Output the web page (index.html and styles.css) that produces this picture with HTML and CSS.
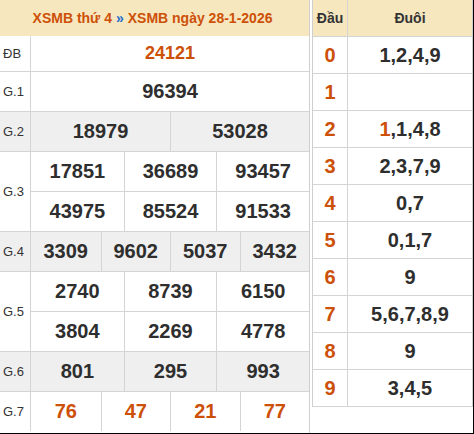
FILE: index.html
```html
<!DOCTYPE html>
<html lang="vi">
<head>
<meta charset="utf-8">
<title>XSMB 28-1-2026</title>
<link rel="stylesheet" href="styles.css">
</head>
<body>
<div class="page">
  <div class="results">
    <div class="res-head">XSMB thứ 4 <span class="sep">»</span> XSMB ngày 28-1-2026</div>
    <div class="prize db"><div class="lbl">ĐB</div><div class="nums c1"><span class="special">24121</span></div></div>
    <div class="prize"><div class="lbl">G.1</div><div class="nums c1"><span>96394</span></div></div>
    <div class="prize alt"><div class="lbl">G.2</div><div class="nums c2"><span>18979</span><span>53028</span></div></div>
    <div class="prize"><div class="lbl">G.3</div><div class="nums c3"><span>17851</span><span>36689</span><span>93457</span><span>43975</span><span>85524</span><span>91533</span></div></div>
    <div class="prize alt"><div class="lbl">G.4</div><div class="nums c4"><span>3309</span><span>9602</span><span>5037</span><span>3432</span></div></div>
    <div class="prize"><div class="lbl">G.5</div><div class="nums c3"><span>2740</span><span>8739</span><span>6150</span><span>3804</span><span>2269</span><span>4778</span></div></div>
    <div class="prize alt"><div class="lbl">G.6</div><div class="nums c3"><span>801</span><span>295</span><span>993</span></div></div>
    <div class="prize last"><div class="lbl">G.7</div><div class="nums c4 hot"><span>76</span><span>47</span><span>21</span><span>77</span></div></div>
  </div>
  <div class="loto">
    <div class="loto-row loto-head"><div class="dau">Đầu</div><div class="duoi">Đuôi</div></div>
    <div class="loto-row"><div class="dau">0</div><div class="duoi">1,2,4,9</div></div>
    <div class="loto-row"><div class="dau">1</div><div class="duoi"></div></div>
    <div class="loto-row"><div class="dau">2</div><div class="duoi"><span class="hl">1</span>,1,4,8</div></div>
    <div class="loto-row"><div class="dau">3</div><div class="duoi">2,3,7,9</div></div>
    <div class="loto-row"><div class="dau">4</div><div class="duoi">0,7</div></div>
    <div class="loto-row"><div class="dau">5</div><div class="duoi">0,1,7</div></div>
    <div class="loto-row"><div class="dau">6</div><div class="duoi">9</div></div>
    <div class="loto-row"><div class="dau">7</div><div class="duoi">5,6,7,8,9</div></div>
    <div class="loto-row"><div class="dau">8</div><div class="duoi">9</div></div>
    <div class="loto-row"><div class="dau">9</div><div class="duoi">3,4,5</div></div>
  </div>
</div>
</body>
</html>
```

FILE: styles.css
```css
* { box-sizing: border-box; }
html, body { margin: 0; padding: 0; background: #fff; }
body { font-family: "Liberation Sans", Arial, sans-serif; color: #333; }

.page {
  width: 474px;
  height: 434px;
  display: flex;
  align-items: flex-start;
  gap: 2px;
  border-right: 1px solid #000;
  border-bottom: 1px solid #000;
  overflow: hidden;
}

/* results table */
.results {
  width: 310px;
  flex: none;
  border-right: 1px solid #cfcfcf;
  height: 433px;
}
.res-head {
  height: 36px;
  background: #f6e7bf;
  color: #cd5008;
  font-weight: bold;
  font-size: 14px;
  display: flex;
  align-items: center;
  justify-content: center;
  padding-right: 4px;
}
.res-head .sep { color: #1f6fce; margin: 0 4px; }

.prize {
  display: grid;
  grid-template-columns: 31px 1fr;
  border-bottom: 1px solid #d4d4d4;
}
.prize.alt { background: #efefef; }
.prize.last { border-bottom: 0; }
.lbl {
  border-right: 1px solid #d4d4d4;
  display: flex;
  align-items: center;
  padding-left: 3px;
  font-size: 13px;
  color: #333;
}
.nums { display: grid; }
.nums span {
  height: 39px;
  display: flex;
  align-items: center;
  justify-content: center;
  font-weight: bold;
  font-size: 20px;
  color: #2e2e2e;
}
.db .nums span { height: 35px; }
.nums .special { color: #cd5008; font-size: 18px; }
.hot span { color: #cd5008; }

.c2 { grid-template-columns: repeat(2, 1fr); }
.c3 { grid-template-columns: repeat(3, 1fr); }
.c4 { grid-template-columns: repeat(4, 1fr); }
.c2 span + span,
.c4 span + span { border-left: 1px solid #d4d4d4; }
.c3 span:not(:nth-child(3n+1)) { border-left: 1px solid #d4d4d4; }
.c3 span:nth-child(-n+3):nth-last-child(n+4) { border-bottom: 1px solid #d4d4d4; height: 40px; }

/* loto table */
.loto {
  width: 161px;
  flex: none;
  border-left: 1px solid #cfcfcf;
  border-right: 1px solid #cfcfcf;
}
.loto-row {
  display: grid;
  grid-template-columns: 35px 1fr;
  height: 37px;
  border-bottom: 1px solid #d4d4d4;
}
.loto-row.loto-head {
  background: #f6e7bf;
  height: 37px;
}
.dau {
  border-right: 1px solid #d4d4d4;
  display: flex;
  align-items: center;
  justify-content: center;
  font-weight: bold;
  font-size: 20px;
  color: #cd5008;
}
.duoi {
  display: flex;
  align-items: center;
  justify-content: center;
  font-weight: bold;
  font-size: 20px;
  color: #2e2e2e;
}
.loto-head .dau,
.loto-head .duoi { font-size: 14px; color: #333; }
.hl { color: #cd5008; }
```
